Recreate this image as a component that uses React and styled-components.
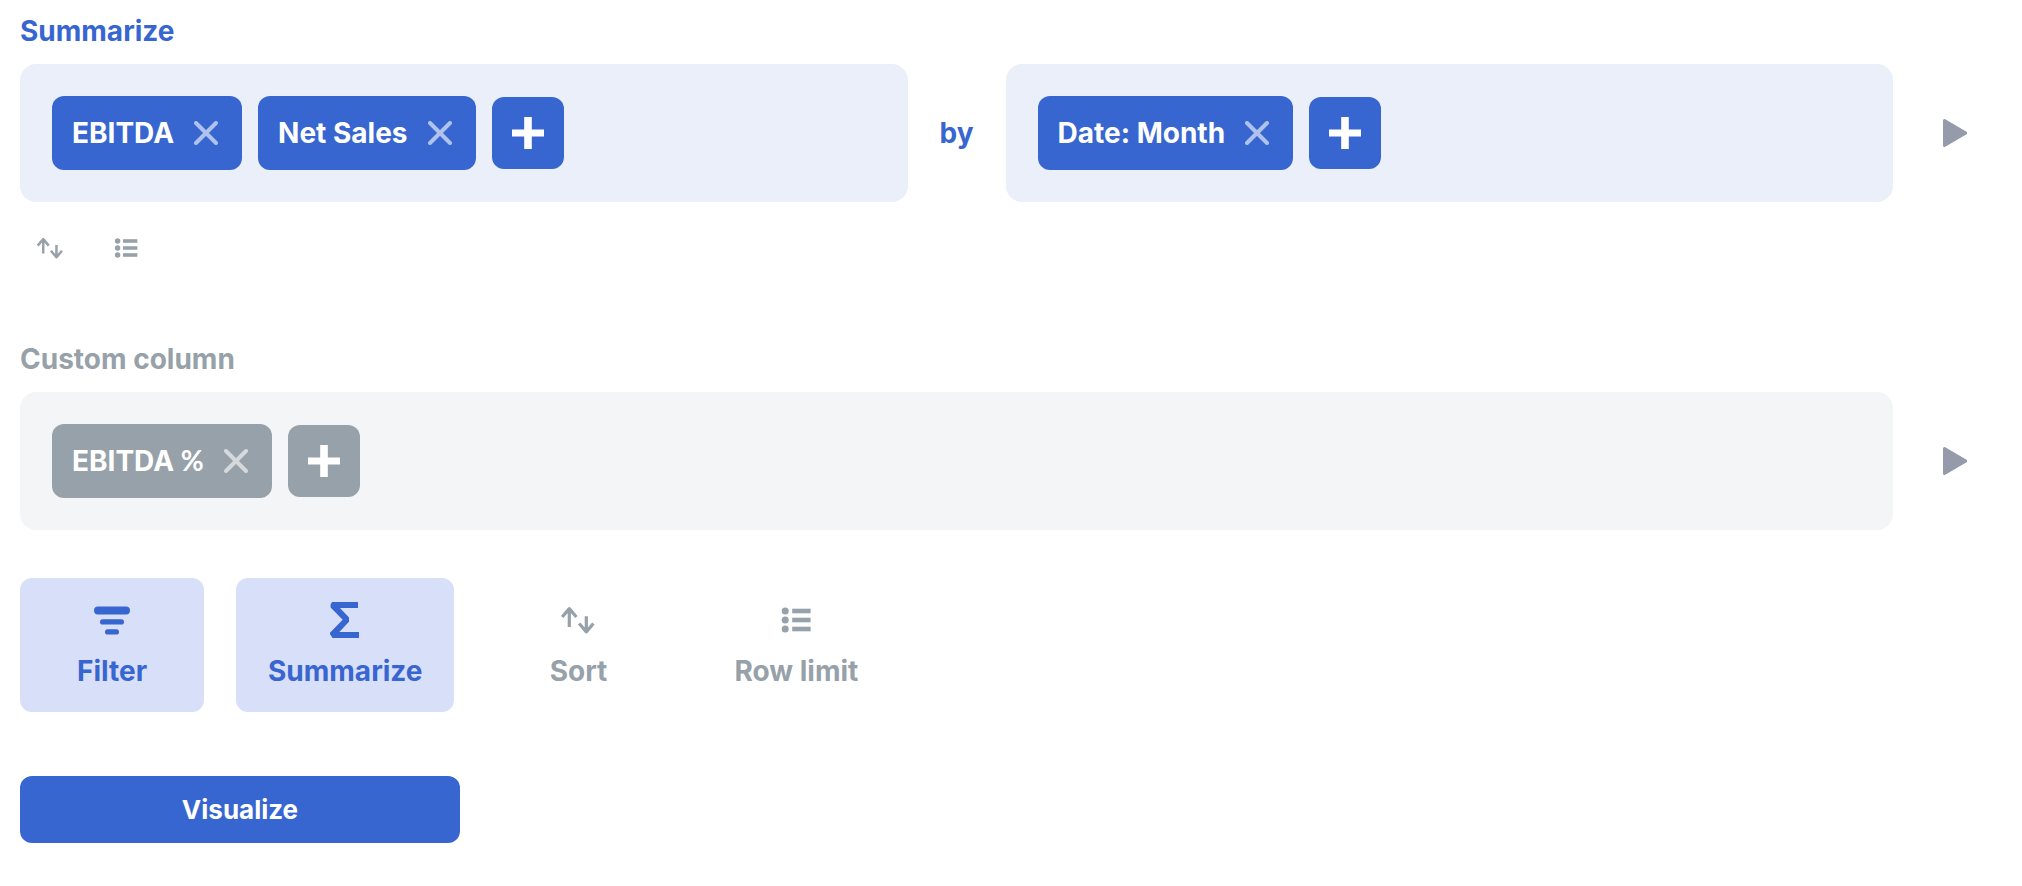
import React, { useState } from "react";
import styled, { createGlobalStyle } from "styled-components";

const BLUE = "#3866d0";
const GRAY = "#97a1a9";

const GlobalStyle = createGlobalStyle`
  * {
    box-sizing: border-box;
  }

  body {
    margin: 0;
    background: #fff;
    font-family: Inter, "Liberation Sans", sans-serif;
    font-size: 28px;
    font-weight: 700;
    line-height: 34px;
  }

  button {
    border: 0;
    background: none;
    font: inherit;
    color: inherit;
    cursor: pointer;
  }

  svg {
    display: block;
  }
`;

const Page = styled.main`
  padding: 14px 20px 40px;
`;

const Step = styled.section`
  color: ${(props) => props.$color};
`;

const StepTitle = styled.h2`
  margin: 0 0 16px;
  font-size: inherit;
  font-weight: inherit;
`;

const StepBody = styled.div`
  display: flex;
  align-items: center;
`;

const Panel = styled.div`
  display: flex;
  flex: 1;
  flex-wrap: wrap;
  align-items: center;
  gap: 16px;
  padding: 32px;
  border-radius: 16px;
  background: ${(props) => props.$background};
`;

const By = styled.span`
  margin: 0 32px;
`;

const Chip = styled.div`
  display: flex;
  align-items: center;
  gap: 20px;
  padding: 20px 24px 20px 20px;
  border-radius: 12px;
  background: ${(props) => props.$color};
  color: #fff;
`;

// the percent sign in Lato is narrower than the one in Inter
const Unit = styled.span`
  font-family: Lato, sans-serif;
  line-height: 1;
`;

const RemoveButton = styled.button`
  padding: 0;
  opacity: 0.6;

  &:hover {
    opacity: 1;
  }
`;

const AddButton = styled.button`
  padding: 20px;
  border-radius: 12px;
  background: ${(props) => props.$color};

  && {
    color: #fff;
  }
`;

const PreviewButton = styled.button`
  margin: 0 19px 0 34px;
  padding: 16px;

  && {
    color: #959baa;
  }
`;

const StepActions = styled.div`
  display: flex;
  gap: 16px;
  margin: 16px 0 64px;
  color: ${GRAY};
`;

const SmallAction = styled.button`
  padding: 16px;
`;

const Actions = styled.div`
  display: flex;
  flex-wrap: wrap;
  gap: 32px;
  margin: 48px 0 64px;
`;

const Action = styled.button`
  display: flex;
  flex-direction: column;
  align-items: center;
  gap: 16px;
  min-width: 184px;
  padding: 24px 32px;
  border-radius: 12px;

  && {
    background: ${(props) => (props.$active ? "#d8dff8" : "transparent")};
    color: ${(props) => (props.$active ? BLUE : GRAY)};
  }
`;

const VisualizeButton = styled.button`
  width: 440px;
  max-width: 100%;
  padding: 18px 32px;
  border-radius: 12px;

  && {
    background: ${BLUE};
    color: #fff;
    font-size: 26px;
    line-height: 31px;
  }
`;

const CloseIcon = () => (
  <svg width="24" height="24" viewBox="0 0 24 24" aria-hidden="true">
    <path
      d="M2 2l20 20M22 2L2 22"
      stroke="currentColor"
      strokeWidth="4"
      strokeLinecap="round"
    />
  </svg>
);

const AddIcon = () => (
  <svg width="32" height="32" viewBox="0 0 32 32" aria-hidden="true">
    <path
      d="M12.2 0h7.6v12.4H32v7.2H19.8V32h-7.6V19.6H0v-7.2h12.2z"
      fill="currentColor"
    />
  </svg>
);

const PlayIcon = () => (
  <svg width="24" height="28" viewBox="0 0 24 28" aria-hidden="true">
    <path
      d="M1.5 1.5L22.8 14L1.5 26.5z"
      fill="currentColor"
      stroke="currentColor"
      strokeWidth="3"
      strokeLinejoin="round"
    />
  </svg>
);

const SortIcon = ({ size = 36 }) => (
  <svg width={size} height={size} viewBox="0 0 36 36" aria-hidden="true">
    <path
      d="M9.3 25V6.6M2.2 15L9.3 6.6L16.4 15M26.3 14.3V30M19.2 21.5L26.3 29.9L33.4 21.5"
      fill="none"
      stroke="currentColor"
      strokeWidth="3.2"
      strokeLinejoin="round"
    />
  </svg>
);

const ListIcon = ({ size = 36 }) => (
  <svg
    width={size}
    height={size}
    viewBox="0 0 36 36"
    fill="currentColor"
    aria-hidden="true"
  >
    {[9, 18, 27].map((y) => (
      <g key={y}>
        <circle cx="7.2" cy={y} r="3.5" />
        <rect x="14.2" y={y - 2.3} width="18.4" height="4.6" />
      </g>
    ))}
  </svg>
);

const FilterIcon = () => (
  <svg
    width="36"
    height="36"
    viewBox="0 0 36 36"
    fill="currentColor"
    aria-hidden="true"
  >
    <rect y="4.4" width="36" height="8" rx="4" />
    <rect x="6" y="17.2" width="24" height="5.4" rx="2.7" />
    <rect x="11" y="27.2" width="14" height="5.4" rx="2.7" />
  </svg>
);

const SumIcon = () => (
  <svg width="36" height="36" viewBox="0 0 36 36" aria-hidden="true">
    <path
      d="M5 0H31V6H13L22 15.6V19.8L12.3 30H32V36H5.6L3 32.2V30.7L15.7 17.8L3.6 5.5V2.5z"
      fill="currentColor"
    />
  </svg>
);

const ChipPanel = ({ initialItems, color, background }) => {
  const [items, setItems] = useState(initialItems);

  return (
    <Panel $background={background}>
      {items.map(({ name, unit }) => (
        <Chip key={name} $color={color}>
          <span>
            {name} {unit && <Unit>{unit}</Unit>}
          </span>
          <RemoveButton
            aria-label={`Remove ${name}`}
            onClick={() => setItems(items.filter((item) => item.name !== name))}
          >
            <CloseIcon />
          </RemoveButton>
        </Chip>
      ))}
      <AddButton $color={color} aria-label="Add">
        <AddIcon />
      </AddButton>
    </Panel>
  );
};

const Preview = () => (
  <PreviewButton aria-label="Preview">
    <PlayIcon />
  </PreviewButton>
);

const actions = [
  { label: "Filter", Icon: FilterIcon, active: true },
  { label: "Summarize", Icon: SumIcon, active: true },
  { label: "Sort", Icon: SortIcon },
  { label: "Row limit", Icon: ListIcon },
];

export default function App() {
  return (
    <>
      <GlobalStyle />
      <Page>
        <Step $color={BLUE}>
          <StepTitle>Summarize</StepTitle>
          <StepBody>
            <ChipPanel
              initialItems={[{ name: "EBITDA" }, { name: "Net Sales" }]}
              color={BLUE}
              background="#ebeffa"
            />
            <By>by</By>
            <ChipPanel
              initialItems={[{ name: "Date: Month" }]}
              color={BLUE}
              background="#ebeffa"
            />
            <Preview />
          </StepBody>
          <StepActions>
            <SmallAction aria-label="Sort">
              <SortIcon size={28} />
            </SmallAction>
            <SmallAction aria-label="Row limit">
              <ListIcon size={28} />
            </SmallAction>
          </StepActions>
        </Step>

        <Step $color={GRAY}>
          <StepTitle>Custom column</StepTitle>
          <StepBody>
            <ChipPanel
              initialItems={[{ name: "EBITDA", unit: "%" }]}
              color={GRAY}
              background="#f3f5f7"
            />
            <Preview />
          </StepBody>
        </Step>

        <Actions>
          {actions.map(({ label, Icon, active }) => (
            <Action key={label} $active={active}>
              <Icon />
              {label}
            </Action>
          ))}
        </Actions>

        <VisualizeButton>Visualize</VisualizeButton>
      </Page>
    </>
  );
}
